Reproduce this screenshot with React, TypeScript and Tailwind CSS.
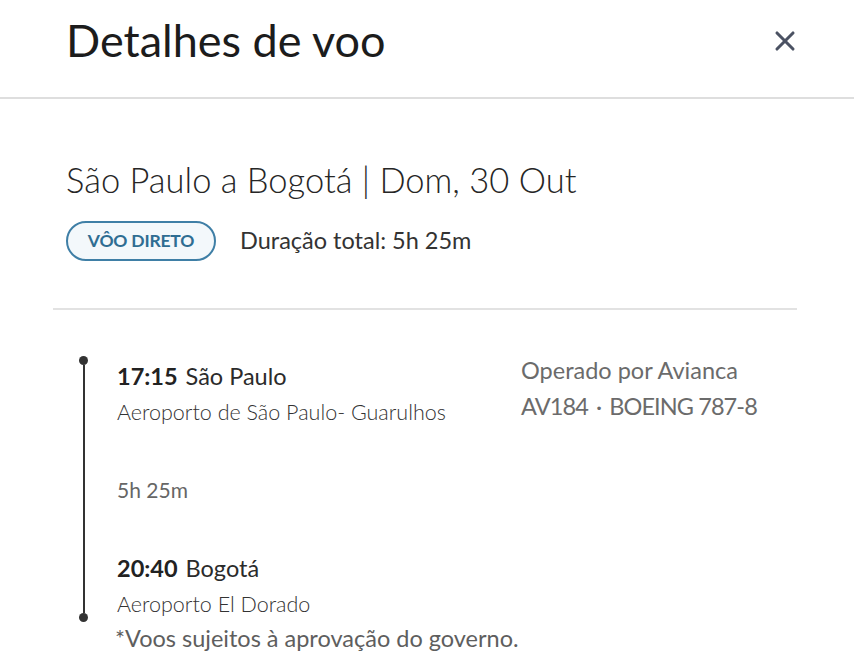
import { X } from 'lucide-react';

const FONT = "font-['Lato','Noto_Sans',sans-serif]";

function TimelineStop({ time, city, airport }: { time: string; city: string; airport: string }) {
  return (
    <div>
      <div className="flex items-baseline gap-[8px] text-[23.5px] leading-[28px] text-[#2b2b2b]">
        <span className="font-bold text-[#222]">{time}</span>
        <span>{city}</span>
      </div>
      <div className="mt-[9px] text-[21.5px] font-light leading-[26px] text-[#333]">{airport}</div>
    </div>
  );
}

export default function App() {
  return (
    <div className={`${FONT} h-[668px] w-[854px] overflow-hidden bg-white`}>
      <header className="flex h-[99px] items-center justify-between border-b-2 border-[#dedede] pb-[16px] pl-[66px] pr-[53px]">
        <h1 className="text-[45px] font-normal leading-none text-[#1c1c1c]">Detalhes de voo</h1>
        <button className="text-[#4b5263]">
          <X size={32} strokeWidth={2.3} />
        </button>
      </header>

      <section className="ml-[53px] mr-[57px] border-b-2 border-[#e2e2e2] pb-[47px] pl-[13px] pt-[60px]">
        <h2 className="text-[34.5px] font-light leading-[42px] text-[#262626]">
          São Paulo a Bogotá | Dom, 30 Out
        </h2>
        <div className="mt-[20px] flex items-center gap-[24px]">
          <span className="flex h-[40px] w-[150px] items-center justify-center rounded-full border-2 border-[#3f7fa6] bg-[#f3f8fb] text-[17.5px] font-bold tracking-[-0.2px] text-[#2f6d92]">
            VÔO DIRETO
          </span>
          <span className="text-[23.5px] text-[#333]">Duração total: 5h 25m</span>
        </div>
      </section>

      <section className="flex pl-[79px] pt-[42px]">
        <div className="flex flex-col items-center pt-[4px]">
          <span className="h-[9px] w-[9px] rounded-full bg-[#333]" />
          <span className="h-[248px] w-[2px] bg-[#333]" />
          <span className="h-[9px] w-[9px] rounded-full bg-[#333]" />
        </div>
        <div className="ml-[29px] w-[404px] pt-[10px]">
          <TimelineStop time="17:15" city="São Paulo" airport="Aeroporto de São Paulo- Guarulhos" />
          <div className="mt-[52px] text-[21px] leading-[26px] text-[#666]">5h 25m</div>
          <div className="mt-[51px]">
            <TimelineStop time="20:40" city="Bogotá" airport="Aeroporto El Dorado" />
          </div>
          <div className="-ml-[2px] mt-[7px] text-[23.5px] leading-[28px] text-[#5e5e5e]">
            *Voos sujeitos à aprovação do governo.
          </div>
        </div>
        <div className="text-[23.5px] leading-[36px] text-[#6b6b6b]">
          <div>Operado por Avianca</div>
          <div className="flex items-baseline gap-[8px] tracking-[-0.9px]">
            <span>AV184</span>
            <span>·</span>
            <span>BOEING 787-8</span>
          </div>
        </div>
      </section>
    </div>
  );
}
